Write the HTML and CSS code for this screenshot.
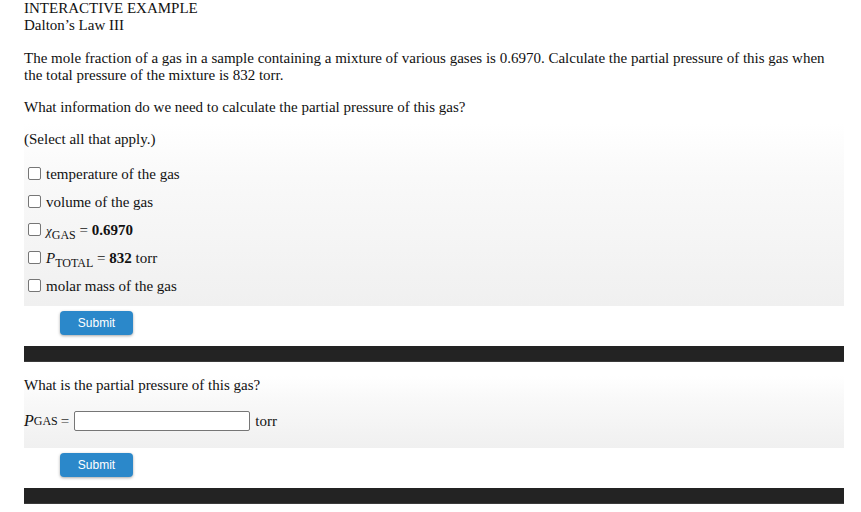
FILE: index.html
```
<!DOCTYPE html>
<html>
<head>
<meta charset="utf-8">
<link rel="stylesheet" href="styles.css">
</head>
<body>
<div class="page">
  <div class="head">
    <div>INTERACTIVE EXAMPLE</div>
    <div>Dalton’s Law III</div>
  </div>
  <p class="problem">The mole fraction of a gas in a sample containing a mixture of various gases is 0.6970. Calculate the partial pressure of this gas when the total pressure of the mixture is 832 torr.</p>
  <p class="q">What information do we need to calculate the partial pressure of this gas?</p>
  <div class="panel panel1">
    <p class="sel">(Select all that apply.)</p>
    <ul class="opts">
      <li><span class="cb"></span>temperature of the gas</li>
      <li><span class="cb"></span>volume of the gas</li>
      <li><span class="cb"></span><span class="chi">χ</span><sub>GAS</sub> = <b>0.6970</b></li>
      <li><span class="cb"></span><i>P</i><sub>TOTAL</sub> = <b>832</b> torr</li>
      <li><span class="cb"></span>molar mass of the gas</li>
    </ul>
  </div>
  <div class="btnrow"><button class="submit">Submit</button></div>
  <div class="bar"></div>
  <div class="panel panel2">
    <p class="q2">What is the partial pressure of this gas?</p>
    <div class="ans"><i class="p">P</i><sub>GAS</sub><span class="eq">=</span><span class="inp"></span><span class="unit">torr</span></div>
  </div>
  <div class="btnrow"><button class="submit">Submit</button></div>
  <div class="bar"></div>
</div>
</body>
</html>
```
FILE: styles.css
```
html, body { margin: 0; padding: 0; background: #fff; }
body, p, ul, li, div, i, b, sub, span { font-family: "Liberation Serif", "Times New Roman", serif; }
body { font-size: 15px; color: #111; }
.page { padding: 0 17px 0 24px; }
.head { line-height: 17px; }
p { margin: 0; }
.problem { margin-top: 16px; line-height: 17px; }
.q { margin-top: 15px; line-height: 17px; }
.panel { background: linear-gradient(to bottom, #ffffff 0%, #f9f9f9 30%, #f0f0f0 100%); }
.panel1 { margin-top: 7px; padding-top: 8px; padding-bottom: 0; }
.sel { line-height: 17px; }
.opts { list-style: none; margin: 18px 0 0 0; padding: 0; }
.opts li { height: 28px; line-height: 17px; white-space: nowrap; }
.cb { display: inline-block; vertical-align: -1px; width: 11px; height: 11px; border: 1px solid #767676; border-radius: 2px; background: #fff; margin: 0 5px 0 4px; }
sub { font-size: 12px; vertical-align: -4px; line-height: 0; }
.chi { font-style: italic; font-size: 13px; }
.btnrow { padding: 5px 0 0 36px; height: 40px; box-sizing: border-box; }
.submit { display: block; width: 73px; height: 24px; border: none; border-radius: 4px; background: #2b88ca; color: #fff; font-family: "Liberation Sans", Arial, sans-serif; font-size: 12px; box-shadow: 0 1px 3px rgba(0,0,0,0.35); padding: 0; }
.bar { height: 15px; background: #232323; border-bottom: 1px solid #3a3a3a; }
.panel2 { margin-top: 14px; padding-top: 1px; padding-bottom: 17px; }
.q2 { line-height: 17px; }
.ans { display: flex; align-items: center; margin-top: 17px; height: 20px; white-space: nowrap; }
.ans .p { font-size: 16px; }
.ans sub { vertical-align: -4px; }
.eq { margin: 0 5px 0 3px; color: #333; }
.inp { display: block; width: 174px; height: 18px; border: 1px solid #767676; border-radius: 2px; background: #fff; }
.unit { margin-left: 5px; }
```
